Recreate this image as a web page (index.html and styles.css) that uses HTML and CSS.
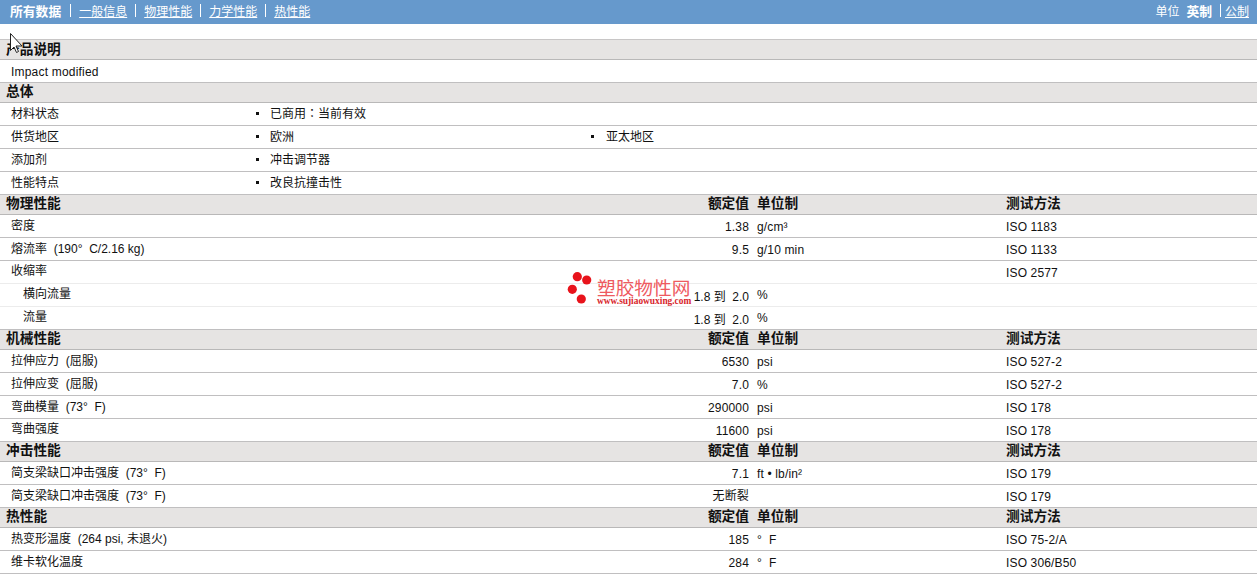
FILE: index.html
```html
<!DOCTYPE html>
<html lang="zh">
<head>
<meta charset="utf-8">
<title>所有数据</title>
<link rel="stylesheet" href="styles.css">
</head>
<body>
<div class="page">
  <nav class="topbar">
    <div class="tabs">
      <strong>所有数据</strong><span class="sep"></span>
      <a href="#">一般信息</a><span class="sep"></span>
      <a href="#">物理性能</a><span class="sep"></span>
      <a href="#">力学性能</a><span class="sep"></span>
      <a href="#">热性能</a>
    </div>
    <div class="units">
      <span>单位</span><strong>英制</strong><span class="sep unit-sep"></span><a href="#">公制</a>
    </div>
  </nav>
  <div class="sheet">
    <div class="head first"><div class="name">产品说明</div></div>
    <div class="row plain"><div class="name">Impact modified</div></div>
    <div class="head"><div class="name">总体</div></div>
    <div class="row gen"><div class="name">材料状态</div><div class="item">已商用<span class="colon" lang="zh-Hant">：</span>当前有效</div></div>
    <div class="row gen"><div class="name">供货地区</div><div class="item">欧洲</div><div class="item">亚太地区</div></div>
    <div class="row gen"><div class="name">添加剂</div><div class="item">冲击调节器</div></div>
    <div class="row gen"><div class="name">性能特点</div><div class="item">改良抗撞击性</div></div>

    <div class="head data"><div class="name">物理性能</div><div class="val">额定值</div><div class="unit">单位制</div><div class="test">测试方法</div></div>
    <div class="row data"><div class="name">密度</div><div class="val">1.38</div><div class="unit">g/cm³</div><div class="test">ISO 1183</div></div>
    <div class="row data"><div class="name">熔流率&nbsp; (190°&nbsp;&nbsp;C/2.16 kg)</div><div class="val">9.5</div><div class="unit">g/10 min</div><div class="test">ISO 1133</div></div>
    <div class="row data sub"><div class="name raised">收缩率</div><div class="val"></div><div class="unit"></div><div class="test">ISO 2577</div></div>
    <div class="row data sub up"><div class="name indent">横向流量</div><div class="val range">1.8 到&nbsp; 2.0</div><div class="unit">%</div><div class="test"></div></div>
    <div class="row data up"><div class="name indent">流量</div><div class="val range">1.8 到&nbsp; 2.0</div><div class="unit">%</div><div class="test"></div></div>

    <div class="head data"><div class="name">机械性能</div><div class="val">额定值</div><div class="unit">单位制</div><div class="test">测试方法</div></div>
    <div class="row data"><div class="name">拉伸应力&nbsp; (屈服)</div><div class="val">6530</div><div class="unit">psi</div><div class="test">ISO 527-2</div></div>
    <div class="row data"><div class="name">拉伸应变&nbsp; (屈服)</div><div class="val">7.0</div><div class="unit">%</div><div class="test">ISO 527-2</div></div>
    <div class="row data"><div class="name">弯曲模量&nbsp; (73°&nbsp;&nbsp;F)</div><div class="val">290000</div><div class="unit">psi</div><div class="test">ISO 178</div></div>
    <div class="row data"><div class="name raised">弯曲强度</div><div class="val">11600</div><div class="unit">psi</div><div class="test">ISO 178</div></div>

    <div class="head data"><div class="name">冲击性能</div><div class="val">额定值</div><div class="unit">单位制</div><div class="test">测试方法</div></div>
    <div class="row data"><div class="name">简支梁缺口冲击强度&nbsp; (73°&nbsp;&nbsp;F)</div><div class="val">7.1</div><div class="unit">ft • lb/in²</div><div class="test">ISO 179</div></div>
    <div class="row data"><div class="name">简支梁缺口冲击强度&nbsp; (73°&nbsp;&nbsp;F)</div><div class="val cjk">无断裂</div><div class="unit"></div><div class="test">ISO 179</div></div>

    <div class="head data"><div class="name">热性能</div><div class="val">额定值</div><div class="unit">单位制</div><div class="test">测试方法</div></div>
    <div class="row data"><div class="name">热变形温度&nbsp; (264 psi, 未退火)</div><div class="val">185</div><div class="unit">°&nbsp;&nbsp;F</div><div class="test">ISO 75-2/A</div></div>
    <div class="row data"><div class="name">维卡软化温度</div><div class="val">284</div><div class="unit">°&nbsp;&nbsp;F</div><div class="test">ISO 306/B50</div></div>
  </div>
</div>

<svg class="cursor" width="14" height="22" viewBox="0 0 14 22"><path d="M0.5 0.5V17.5L4 14L6.5 19.5L8.5 18.5L6 13H12Z" fill="#fff" stroke="#222" stroke-width="1"/></svg>

<div class="mark">
  <svg class="dots" width="26" height="34" viewBox="0 0 26 34"><circle cx="10.3" cy="5.7" r="4.6" fill="#e8131b"/><circle cx="19.7" cy="9" r="4.6" fill="#e8131b"/><circle cx="5.3" cy="18.3" r="4.6" fill="#e8131b"/><circle cx="14.3" cy="28" r="4.6" fill="#e8131b"/></svg>
  <div class="mark-text"><div class="mark-cn">塑胶物性网</div><div class="mark-url">www.sujiaowuxing.com</div></div>
</div>
</body>
</html>
```

FILE: styles.css
```css
* { box-sizing: border-box; }
html, body { margin: 0; padding: 0; background: #fff; }
body {
  font-family: "Liberation Sans", "Noto Sans CJK SC", sans-serif;
  font-size: 12px;
  color: #111;
  overflow: hidden;
}
.page { width: 1257px; }
.topbar {
  height: 24px;
  background: #6699cc;
  color: #fff;
  display: flex;
  justify-content: space-between;
  align-items: center;
  padding: 0 8px 3px 10px;
  margin-bottom: 15px;
}
.topbar a { color: #fff; text-decoration: underline; }
.topbar strong { font-size: 12.8px; }
.tabs, .units { display: flex; align-items: center; }
.tabs strong { margin-right: 1px; }
.sep { display: inline-block; width: 1px; height: 13px; background: #fff; margin: 0 8px; }
.units strong { margin-left: 7px; }
.unit-sep { margin: 0 4px 0 8px; }
.head {
  height: 20px;
  background: #e6e4e3;
  border-bottom: 1px solid #b9b8b8;
  font-size: 13.7px;
  font-weight: bold;
  display: flex;
  align-items: center;
  padding-bottom: 5px;
}
.head.first { height: 21px; border-top: 1px solid #c8c6c6; padding-bottom: 3px; }
.head .name { padding-left: 6px; }
.row {
  height: 23px;
  border-bottom: 1px solid #c0bfc0;
  display: flex;
  align-items: center;
  padding-bottom: 4px;
}
.row.plain { padding: 2px 0 0; letter-spacing: 0.2px; }
.row.up { padding-bottom: 6px; }
.row .name { padding-left: 11px; }
.row .name.raised { padding-bottom: 2px; }
.sub { border-bottom-color: #ececec; }
.name { width: 256px; white-space: nowrap; flex: none; }
.row .name.indent { padding-left: 23px; }
.item { width: 335px; flex: none; padding-left: 14px; position: relative; }
.item + .item { padding-left: 15px; }
.item::before {
  content: "";
  position: absolute;
  left: 0;
  top: 8px;
  width: 3px;
  height: 3px;
  background: #111;
}
.colon { font-family: "Noto Sans CJK TC", sans-serif; }
.data .val { width: 493px; text-align: right; flex: none; white-space: nowrap; }
.data .unit { width: 257px; padding-left: 8px; flex: none; white-space: nowrap; }
.data .test { flex: none; white-space: nowrap; }
.row.data .val, .row.data .unit, .row.data .test { letter-spacing: 0.15px; }
.row.data .val.range { letter-spacing: 0; }
.row.data .val:not(.cjk), .row.data .unit, .row.data .test { position: relative; top: 3px; }
.cursor { position: absolute; left: 10px; top: 33px; }
.mark {
  position: absolute;
  left: 567px;
  top: 271px;
  display: flex;
  gap: 4px;
  color: #ee5a60;
}
.dots { flex: none; }
.mark-text { padding-top: 6px; }
.mark-cn { font-family: "Noto Sans CJK SC", sans-serif; font-size: 18.7px; line-height: 20px; white-space: nowrap; }
.mark-url { font-family: "Liberation Serif", serif; font-size: 9.4px; font-weight: bold; line-height: 9px; white-space: nowrap; color: #d8262c; }
```
